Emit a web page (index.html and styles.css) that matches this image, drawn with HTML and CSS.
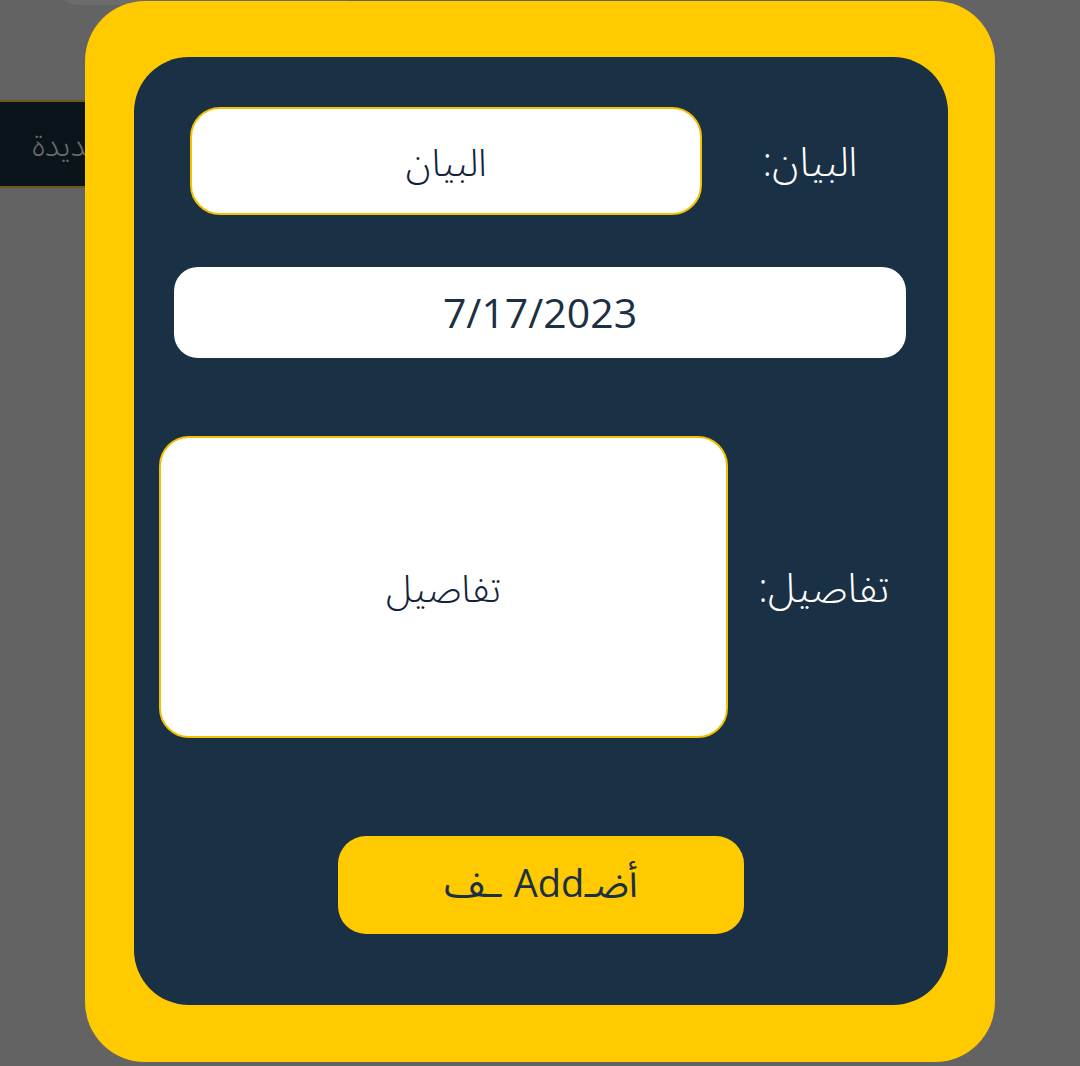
FILE: index.html
```html
<!DOCTYPE html>
<html lang="ar">
<head>
<meta charset="utf-8">
<title>إضافة</title>
<link rel="stylesheet" href="styles.css">
</head>
<body>
<div class="page">
  <div class="top-pill"></div>
  <div class="bar"><span class="bar-text">مهمة جديدة</span></div>

  <div class="modal">
    <form class="panel" dir="rtl">
      <div class="row row-title">
        <label class="label label-title">البيان:</label>
        <div class="field field-title">البيان</div>
      </div>
      <div class="row row-date">
        <div class="field field-date">7/17/2023</div>
      </div>
      <div class="row row-details">
        <label class="label label-details">تفاصيل:</label>
        <div class="field field-details">تفاصيل</div>
      </div>
      <div class="row row-btn">
        <button type="button" class="btn">أضـAdd ـف</button>
      </div>
    </form>
  </div>
</div>
</body>
</html>
```

FILE: styles.css
```css
* { box-sizing: border-box; }

html, body {
  margin: 0;
  padding: 0;
}

body {
  background: #636363;
  font-family: "Open Sans", "Noto Sans Arabic", "DejaVu Sans", sans-serif;
  width: 1080px;
  height: 1066px;
  overflow: hidden;
}

.page {
  position: relative;
  width: 1080px;
  height: 1066px;
  padding-top: 100px;
}

.top-pill {
  position: absolute;
  left: 56px;
  top: -40px;
  width: 300px;
  height: 45px;
  border-radius: 22px;
  background: #6c6c6c;
}

.bar {
  width: 320px;
  height: 88px;
  background: #0a141b;
  border-top: 2px solid #6b5a12;
  border-bottom: 2px solid #6b5a12;
  display: flex;
  align-items: center;
  padding-left: 32px;
}

.bar-text {
  direction: rtl;
  color: #6c6c6c;
  font-size: 32px;
  line-height: 1;
  font-weight: 300;
}

.modal {
  position: absolute;
  left: 85px;
  top: 1px;
  width: 910px;
  height: 1061px;
  background: #ffca00;
  border-radius: 60px;
  padding: 56px 47px 57px 49px;
}

.panel {
  width: 814px;
  height: 948px;
  background: #1a3044;
  border-radius: 55px;
  display: flex;
  flex-direction: column;
  margin: 0;
}

.row {
  display: flex;
  align-items: center;
}

.label {
  color: #ffffff;
  font-size: 40px;
  font-weight: 300;
  line-height: 1;
  text-align: center;
  white-space: nowrap;
}

.field {
  background: #ffffff;
  color: #10223a;
  display: flex;
  align-items: center;
  justify-content: center;
  font-size: 38px;
  font-weight: 300;
  line-height: 1;
}

.row-title {
  margin-top: 50px;
  padding-right: 88px;
  gap: 58px;
}

.label-title { width: 100px; }

.field-title {
  width: 512px;
  height: 108px;
  border: 2px solid #f2c200;
  border-radius: 30px;
}

.row-date {
  margin-top: 52px;
  padding: 0 42px 0 40px;
}

.field-date {
  width: 732px;
  height: 91px;
  border-radius: 24px;
  font-size: 41px;
  font-weight: 400;
  color: #1b3044;
  direction: ltr;
}

.row-details {
  margin-top: 78px;
  padding-right: 56px;
  gap: 28px;
}

.label-details { width: 136px; }

.field-details {
  width: 569px;
  height: 302px;
  border: 2px solid #f2c200;
  border-radius: 30px;
}

.row-btn {
  margin-top: 98px;
  justify-content: center;
}

.btn {
  width: 406px;
  height: 98px;
  border: none;
  border-radius: 28px;
  background: #ffca00;
  color: #1b3044;
  font-family: "Open Sans", "Noto Sans Arabic", "DejaVu Sans", sans-serif;
  font-size: 38px;
  font-weight: 400;
  direction: rtl;
  padding: 0;
}
```
